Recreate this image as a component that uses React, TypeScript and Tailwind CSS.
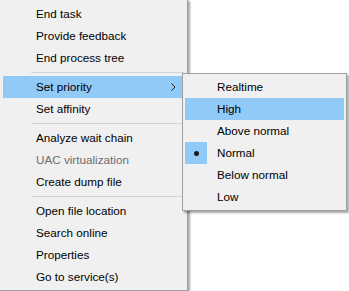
import React from "react";

type Item = { label: string; disabled?: boolean; sub?: boolean; hl?: boolean } | "sep";

const mainItems: Item[] = [
  { label: "End task" },
  { label: "Provide feedback" },
  { label: "End process tree" },
  "sep",
  { label: "Set priority", sub: true, hl: true },
  { label: "Set affinity" },
  "sep",
  { label: "Analyze wait chain" },
  { label: "UAC virtualization", disabled: true },
  { label: "Create dump file" },
  "sep",
  { label: "Open file location" },
  { label: "Search online" },
  { label: "Properties" },
  { label: "Go to service(s)" },
];

const subItems = [
  { label: "Realtime" },
  { label: "High", hl: true },
  { label: "Above normal" },
  { label: "Normal", checked: true },
  { label: "Below normal" },
  { label: "Low" },
];

const font = { fontFamily: '"Liberation Sans", Arial, sans-serif' };

export default function App() {
  return (
    <div className="relative w-[349px] h-[291px] bg-white overflow-hidden" style={font}>
      {/* main menu */}
      <div className="absolute left-[-1px] top-[-1px] w-[189px] border border-[#a0a0a0] bg-[#f0f0f0] pt-[3px] pb-[2px] px-[3px] shadow-[2px_2px_2px_rgba(0,0,0,0.35)]">
        {mainItems.map((it, i) =>
          it === "sep" ? (
            <div key={i} className="h-[7px] flex items-center pl-[28px] pr-[0px]">
              <div className="h-px w-full bg-[#d5d5d5]" />
            </div>
          ) : (
            <div
              key={i}
              className={`relative h-[22px] flex items-center pl-[33px] text-[11.7px] leading-none ${
                it.hl ? "bg-[#91c9f7]" : ""
              } ${it.disabled ? "text-[#6d6d6d]" : "text-black"}`}
            >
              {it.label}
              {it.sub && (
                <svg className="absolute left-[168px] top-[7px]" width="5" height="8" viewBox="0 0 5 8">
                  <polyline points="0.5,0.5 4,4 0.5,7.5" fill="none" stroke="#222" strokeWidth="1" />
                </svg>
              )}
            </div>
          )
        )}
      </div>

      {/* submenu */}
      <div className="absolute left-[182px] top-[73px] w-[165px] border border-[#a0a0a0] bg-[#f0f0f0] p-[2px] shadow-[2px_2px_2px_rgba(0,0,0,0.35)]">
        {subItems.map((it, i) => (
          <div
            key={i}
            className={`relative h-[22px] flex items-center pl-[32px] text-[11.7px] leading-none text-black ${
              it.hl ? "bg-[#91c9f7]" : ""
            }`}
          >
            {it.checked && (
              <div className="absolute left-0 top-0 w-[22px] h-[22px] bg-[#91c9f7] flex items-center justify-center">
                <div className="w-[5px] h-[5px] rounded-full bg-[#1a1a1a]" />
              </div>
            )}
            {it.label}
          </div>
        ))}
      </div>
    </div>
  );
}
